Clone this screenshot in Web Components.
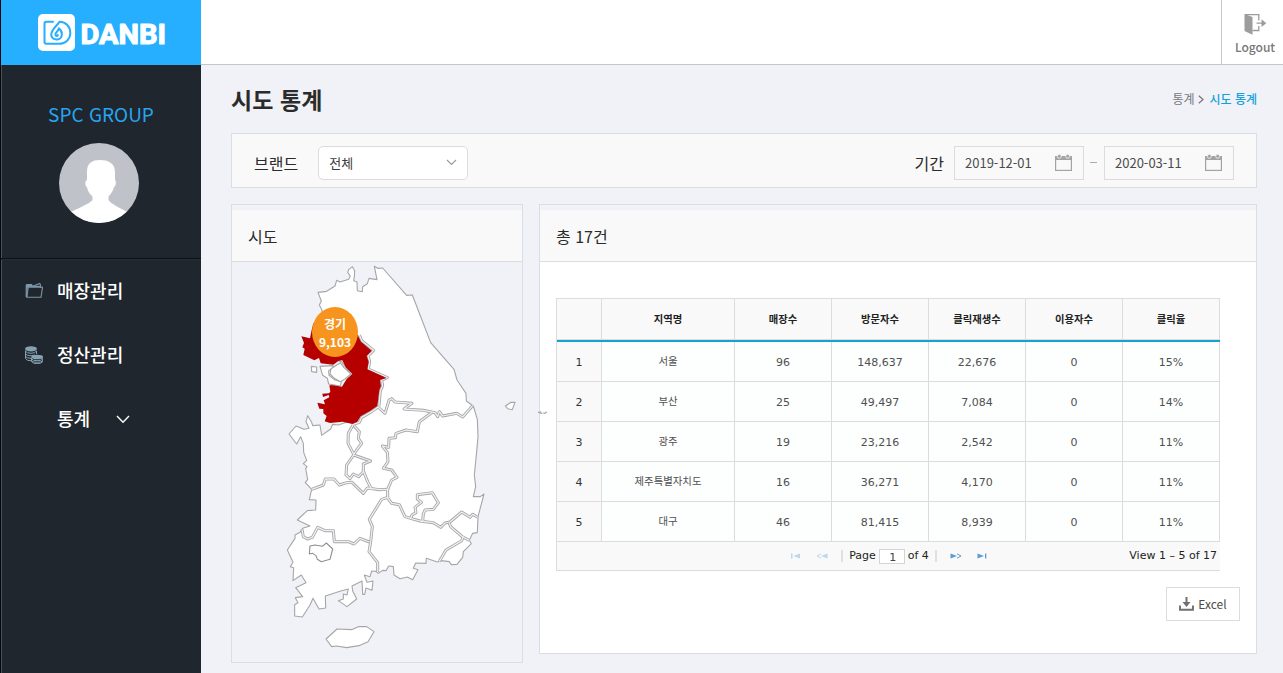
<!DOCTYPE html>
<html lang="ko">
<head>
<meta charset="utf-8">
<title>DANBI</title>
<style>
html,body{margin:0;height:100%;overflow:hidden}
body{font-family:"Noto Sans CJK KR","Noto Sans",sans-serif;color:#333;background:#f1f2f7}
</style>
</head>
<body>
<danbi-app></danbi-app>
<script>
const define = (name, html, setup) => customElements.define(name, class extends HTMLElement {
  connectedCallback() {
    if (this.shadowRoot) return;
    const root = this.attachShadow({ mode: 'open' });
    root.innerHTML = typeof html === 'function' ? html(this) : html;
    if (setup) setup(root, this);
  }
});

define('danbi-logo', `
<style>
:host{display:block;height:65px;background:#26aeff;border-left:1px solid #04060a;box-sizing:border-box}
svg{display:block}
text{font:700 28.5px Roboto,sans-serif;fill:#fff;stroke:#fff;stroke-width:1.1;stroke-linejoin:round}
</style>
<svg width="200" height="65" viewBox="1 0 200 65">
  <rect x="38" y="14" width="37" height="37" rx="5" fill="#fff"/>
  <g fill="none" stroke="#26aeff" stroke-width="2" stroke-linecap="round" stroke-linejoin="round">
    <path d="M53 21.800H46.200Q44.500 21.800 44.500 23.500V42Q44.500 43.800 46.200 43.800H58.500C66.500 43.800 70.300 38.600 70.300 32.800C70.300 26.600 66 22 59.500 21.800C58 24.600 51.200 29.800 51.200 34.400C51.200 41.300 61.900 41.200 61.900 34.200C61.900 31.500 60.600 29.800 58.800 28.300C59 31 55.200 32 55.500 34.600C55.700 36.500 57.600 36.300 57.800 35"/>
  </g>
  <text x="80.500" y="43.500" textLength="85.500" lengthAdjust="spacingAndGlyphs">DANBI</text>
</svg>`);

define('user-card', `
<style>
:host{display:flex;flex-direction:column;align-items:center;border-bottom:1px solid #0d1116;padding-top:35px;box-sizing:border-box;height:194px;box-shadow:0 1px #262d36}
.name{color:#26a5f2;font-size:19px;line-height:28px;white-space:nowrap}
svg{margin-top:15px;margin-right:4px}
</style>
<div class="name"><slot></slot></div>
<svg width="80" height="80" viewBox="0 0 80 80">
  <defs><clipPath id="c"><circle cx="40" cy="40" r="40"/></clipPath></defs>
  <g clip-path="url(#c)"><rect width="80" height="80" fill="#bfc3c9"/>
  <path fill="#fff" d="M28 29C28 20 33 17 41 17S56 20 56 29V37C57.500 38 57 43 55 44C54 48 51.500 51.500 49.500 53.500V57C52 61 60 64.500 68 69V80H12V69C21 64.500 30 61 33.500 57V53.500C31 51.500 28.500 48 28 44C26 43 25.500 38 28 37Z"/></g>
</svg>`);

const menuIcons = {
  folder: `<path fill="none" stroke="#7d97a8" stroke-width="1.100" d="M1.200 15V3.500L2 2.500H6.500L7.500 4.300H15.500V6M1.200 15.300H16L17.500 5.300H3.200L2 15"/><path fill="#7d97a8" d="M1 2.500H7L8 5H3L1.500 13ZM8 3.500L15 .8L16.500 3.800L15.500 4L14.500 2.200L9 4.200Z"/>`,
  coins: `<g fill="#86a1b2"><ellipse cx="6" cy="2.800" rx="6" ry="2.600"/><ellipse cx="12.200" cy="11" rx="5.900" ry="2.300"/></g><g fill="none" stroke="#86a1b2" stroke-width="1"><path d="M.500 4.500V12.500Q1.500 14.700 6 14.800M.500 5.300Q2 7.300 6 7.300T11.500 5V8M.500 8Q2 9.800 6 9.800L10 9M.500 10.500Q2 12.300 6 12.300M6.500 11.500V15.500Q8 17.700 12.200 17.700T17.800 15.500V11.500M6.500 13Q8 14.700 12.200 14.700T17.800 13M6.500 14.800Q8 16.300 12.200 16.300T17.800 14.800"/></g>`
};
define('menu-item', el => `
<style>
:host{display:flex;align-items:center;height:64px;padding-left:24px;color:#fff;font-size:18px;font-weight:500}
.i{width:18px;height:18px;margin-right:14px}
.i svg{display:block}
.c{margin-left:26px}
span{white-space:nowrap;line-height:26px;margin-top:-2px}
</style>
<div class="i"><svg width="18" height="18" viewBox="0 0 18 18">${menuIcons[el.getAttribute('icon')] || ''}</svg></div>
<span><slot></slot></span>
${el.hasAttribute('expandable') ? '<svg class="c" width="14" height="9" viewBox="0 0 14 9"><path d="M1 1L7 7.200L13 1" fill="none" stroke="#fff" stroke-width="1.400"/></svg>' : ''}`);

define('side-bar', `
<style>
:host{display:block;width:201px;flex:none;background:#1f262d}
.body{border-left:1px solid #04060a;box-shadow:inset 1px 0 #4c5157;height:608px}
</style>
<danbi-logo></danbi-logo>
<div class="body">
<user-card>SPC GROUP</user-card>
<menu-item icon="folder">매장관리</menu-item>
<menu-item icon="coins">정산관리</menu-item>
<menu-item expandable>통계</menu-item>
</div>`);

define('top-bar', `
<style>
:host{display:flex;justify-content:flex-end;height:65px;box-sizing:border-box;background:#fff;border-bottom:1px solid #c6c6ca}
.out{width:61px;border-left:1px solid #c6c6ca;display:flex;flex-direction:column;align-items:center;padding:13px 0 0 4px;color:#777;font-size:12px;font-weight:500;line-height:18px;box-sizing:border-box;width:62px;white-space:nowrap}
svg{margin-bottom:3px;flex:none;margin-left:2px}
span{padding-left:1px}
</style>
<div class="out">
<svg width="23" height="22" viewBox="0 0 23 22"><path fill="#9c9c9c" d="M.500 1L8.500 4V21.800L.500 18Z"/><path fill="none" stroke="#9c9c9c" stroke-width="1.300" d="M1 1.600H14.800V7.500M14.800 13V17.500H8.500M12.500 10.200H19"/><path fill="#9c9c9c" d="M17.500 6.300L22.300 10.200L17.500 14Z"/></svg>
<span>Logout</span>
</div>`);

define('page-title', `
<style>
:host{display:flex;justify-content:space-between;height:68px}
h1{margin:0;padding-top:16px;font-size:23px;line-height:36px;font-weight:700;color:#2b2b2b;letter-spacing:.1px}
.crumb{padding-top:25px;font-size:12px;line-height:18px;color:#777;display:flex;align-items:center;height:18px}
svg{margin:1px 5px 0 4px}
b{font-weight:500;color:#13a2dc}
</style>
<h1>시도 통계</h1>
<div class="crumb">통계<svg width="6" height="9" viewBox="0 0 6 9"><path d="M.800 .800L5 4.500L.800 8.200" fill="none" stroke="#777" stroke-width="1.200"/></svg><b>시도 통계</b></div>`);

define('date-field', `
<style>
:host{display:flex;align-items:center;justify-content:space-between;width:130px;height:34px;border:1px solid #dcdcdc;box-sizing:border-box;padding:0 11px 0 10px;font-size:13px;color:#4c4c4c;white-space:nowrap}
</style>
<span><slot></slot></span>
<svg width="17" height="17" viewBox="0 0 17 17"><rect x=".600" y="2.600" width="15.800" height="13.800" fill="none" stroke="#a3a3a3" stroke-width="1.200"/><path fill="#a3a3a3" d="M0 2H17V6H0Z"/><g fill="#a3a3a3" stroke="#f9f9f9" stroke-width=".800"><circle cx="4.300" cy="2.300" r="2"/><circle cx="12.700" cy="2.300" r="2"/></g></svg>`);

define('filter-bar', `
<style>
:host{display:flex;align-items:center;height:55px;box-sizing:border-box;border:1px solid #dcdde0;background:#f9f9f9;padding:4px 22px 0;font-size:16px;line-height:24px;color:#2b2b2b}
.sel{display:flex;align-items:center;justify-content:space-between;margin-left:20px;width:150px;height:34px;box-sizing:border-box;border:1px solid #dcdcdc;border-radius:5px;background:#fff;padding:0 10px;font-size:13px;color:#3c3c3c}
.r{display:flex;align-items:center;margin-left:auto}
date-field{margin-left:10px}
i{width:7px;height:1px;background:#aaa;margin-left:6px}
i + date-field{margin-left:7px}
</style>
<span>브랜드</span>
<div class="sel"><span>전체</span><svg width="11" height="7" viewBox="0 0 11 7"><path d="M1 1L5.500 5.500L10 1" fill="none" stroke="#999" stroke-width="1.100"/></svg></div>
<div class="r"><span>기간</span><date-field>2019-12-01</date-field><i></i><date-field>2020-03-11</date-field></div>`);

define('info-panel', `
<style>
:host{display:block;box-sizing:border-box;border:1px solid #dcdde0}
.h{height:51px;margin-top:5px;background:#f9f9f9;border-bottom:1px solid #dcdde0;padding-left:16px;font-size:16px;line-height:53px;color:#2b2b2b;white-space:nowrap}
.b{background:var(--body-bg,transparent);height:calc(100% - 57px)}
</style>
<div class="h"><slot name="title"></slot></div>
<div class="b"><slot></slot></div>`);

/* Map geometry: 3 units per pixel, origin at the map's top left corner */
const borders = [
 '238,225 246,243 281,271 264,288 269,305 265,327 322,353 305,360 308,378 301,392 297,438',
 '217,494 238,487 245,472 275,455 294,441 315,460 327,421 335,416 345,426 396,430 372,447 430,451 465,458 473,470 478,455 488,468 530,460 548,471 578,437',
 '455,458 418,485 412,515 378,510 348,520 346,533 327,535 326,562 307,558 322,577 324,605 310,625 335,630 351,652 335,660 323,688',
 '95,688 130,675 136,657 162,657 178,675 200,668 216,667 250,700 262,684 298,689 323,688 323,714 335,730 358,734 375,770 392,775 420,783 460,788 482,802 495,789 510,786 545,756 570,772 578,763 592,771',
 '323,712 305,718 268,778 277,800 272,845 267,875 293,908 293,936',
 '66,808 70,830 82,837 97,832 113,802 135,812 160,812 163,845 205,845 222,852 240,835 268,846',
 '219,495 205,520 204,550 221,583 230,570 245,550 235,535 238,515 222,497',
 '221,585 272,603 250,612 250,635 236,650 220,642 210,656 198,645 200,615 221,585',
 '250,633 263,665 275,688',
 '392,775 396,765 408,758 405,742 424,727 412,717 412,704 457,698 475,728 460,748 435,750 430,762 428,783',
 '508,790 512,800 548,831 568,841','550,829 545,842 498,870 478,904'
];
define('region-map', `
<style>
:host{display:block;position:relative;height:100%;z-index:1}
svg{display:block;overflow:visible}
.land{fill:#fff;stroke:#a6a6a6;stroke-width:3.300;stroke-linejoin:round}
.o{fill:none;stroke:#a6a6a6;stroke-width:9;stroke-linejoin:round}
.n{fill:none;stroke:#eff0f5;stroke-width:3.800;stroke-linejoin:round}
.pin{position:absolute;left:80px;top:45px;width:46px;height:50px;border-radius:50%;background:#f7941e;color:#fff;font-weight:700;font-size:12px;line-height:18px;text-align:center;box-sizing:border-box;padding-top:8px}
</style>
<svg width="291" height="400" viewBox="-144 6 873 1200">
<polygon class="land" points="114,97 140,94 165,78 170,61 180,66 206,58 211,48 203,37 206,29 217,20 224,32 223,50 221,62 231,66 232,92 247,95 248,80 262,71 267,55 291,59 283,19 293,25 308,24 380,106 397,105 452,248 522,328 531,360 558,400 559,423 580,438 592,478 594,530 590,575 583,645 587,680 580,710 601,710 612,702 594,770 592,818 578,820 568,841 574,851 550,875 548,892 531,913 514,914 508,905 484,902 472,906 439,895 438,910 407,909 400,925 414,929 398,959 382,951 360,956 342,945 340,920 326,918 318,932 308,931 295,940 288,934 275,933 270,950 253,945 261,967 279,963 276,991 258,984 254,1003 248,1003 246,963 216,978 218,992 230,1017 201,1040 175,1022 190,1017 190,1002 201,1005 205,987 180,994 136,1008 137,1044 117,1047 99,1015 90,1035 67,1071 44,1068 44,1034 54,1028 46,1013 68,1010 47,983 78,968 64,945 39,962 41,923 31,920 39,907 22,870 45,835 45,825 60,817 68,805 90,798 52,780 82,752 107,750 108,720 88,719 95,688 76,668 83,658 77,626 81,620 70,611 80,601 71,577 70,550 62,530 50,552 27,522 48,498 72,508 87,505 78,485 83,467 95,487 98,497 120,495 125,526 152,507 158,493 175,495 200,487 160,470 160,400 185,385 215,345 185,305 130,290 126,150 118,135 124,123"/>
<g id="b"></g>
<polygon fill="#b60000" points="100,190 95,210 90,235 64,229 72,249 67,262 74,266 70,285 103,301 117,294 122,310 160,314 175,303 187,301 197,322 217,342 200,357 186,380 165,375 148,376 151,395 147,400 127,401 129,411 146,405 148,412 131,421 135,433 112,428 118,446 130,447 130,460 140,468 134,484 150,489 188,485 217,492 232,485 242,469 270,453 292,438 298,390 303,378 300,360 320,354 262,328 266,305 260,288 275,272 243,245 233,225 200,190"/>
<g class="land">
<polygon points="120,319 158,317 162,322 146,332 147,346 165,360 184,365 181,378 146,372 142,355 128,346"/>
<polygon points="153,326 181,308 192,323 213,342 195,357 181,365 163,355 150,342"/>
<polygon points="94,319 110,321 110,337 95,335"/>
<polygon points="90,858 105,855 127,859 139,849 158,867 150,898 124,905 112,898 108,887 98,880 88,882" stroke="#8e8e8e"/>
<polygon points="171,1107 215,1109 235,1100 260,1100 282,1115 264,1145 237,1157 200,1163 170,1158 155,1160 138,1137"/>
<polygon points="676,438 693,427 705,427 697,449 683,446"/>
<path d="M774 457L783 456L779 459L787 460M789 459L794 460L801 456M794 460H797"/>
</g>
</svg>
<div class="pin">경기<br>9,103</div>`, root => {
  const seg = c => borders.map(p => `<polyline class="${c}" points="${p}"/>`).join('');
  root.getElementById('b').innerHTML = seg('o') + seg('n');
});

const rows = [['서울','96','148,637','22,676','0','15%'],['부산','25','49,497','7,084','0','14%'],['광주','19','23,216','2,542','0','11%'],['제주특별자치도','16','36,271','4,170','0','11%'],['대구','46','81,415','8,939','0','11%']];
define('data-grid', `
<style>
:host{display:block;width:664px;box-sizing:border-box;font:11px "DejaVu Sans","Noto Sans CJK KR",sans-serif;color:#505050;letter-spacing:0}
.t{border-left:1px solid #dcdcdc;border-top:1px solid #dcdcdc}
.row{display:grid;grid-template-columns:45px 133px repeat(5,97px)}
.row>div{height:40px;line-height:42px;box-sizing:border-box;border-right:1px solid #dcdcdc;border-bottom:1px solid #dcdcdc;text-align:center;background:#fdfefe;white-space:nowrap}
.row>.k{background:#f9f9f9;color:#333}
.row>.n{font:10.400px/37px "Noto Sans CJK KR",sans-serif}
.head{border-bottom:2px solid #12a4cf}
.row.head>div{font:700 10.300px/40px "Noto Sans CJK KR",sans-serif;height:41px;background:#f9f9f9;color:#222}
.p{display:grid;grid-template-columns:1fr auto 1fr;height:29px;box-sizing:border-box;border-left:1px solid #dcdcdc;border-bottom:1px solid #dcdcdc;background:#f9f9f9;color:#222;align-items:center;padding-right:3px}
.c{grid-column:2;display:flex;align-items:center;height:28px;padding-left:4px}
.c span{line-height:27px;height:28px}
.v{text-align:right;line-height:28px;white-space:nowrap}
.in{width:26px;height:15px;box-sizing:border-box;border:1px solid #d5d5d5;background:#fff;text-align:center;line-height:15px;margin:1px 3px 0;padding-left:2px;color:#444}
u{width:2px;height:12px;background:#e0e0e0;text-decoration:none}
svg{display:block}
.g1{margin-right:15px}.g2{margin-right:13px}.g3{margin:0 15px 0 13px}
</style>
<div class="t">
<div class="row head"><div></div><div>지역명</div><div>매장수</div><div>방문자수</div><div>클릭재생수</div><div>이용자수</div><div>클릭율</div></div>
${rows.map((r,i)=>`<div class="row"><div class="k">${i+1}</div>${r.map((v,j)=>`<div${j?'':' class="n"'}>${v}</div>`).join('')}</div>`).join('')}
</div>
<div class="p"><div class="c">
<svg class="g1" width="10" height="6" viewBox="0 0 10 6"><path fill="#bcd6ea" d="M0 .500H1.500V5.500H0ZM9 .500V5.500L2.500 3Z"/></svg>
<svg class="g2" width="12" height="6" viewBox="0 0 12 6"><path fill="#bcd6ea" d="M11.500 .500V5.500L5 3Z"/><path fill="none" stroke="#bcd6ea" d="M5 .800L1 3L5 5.200"/></svg>
<u></u><span style="margin-left:6px">Page</span><div class="in">1</div><span>of 4</span><u style="margin-left:6px"></u>
<svg class="g3" width="12" height="6" viewBox="0 0 12 6"><path fill="#5b9dd3" d="M.500 .500V5.500L7 3Z"/><path fill="none" stroke="#5b9dd3" d="M7 .800L11 3L7 5.200"/></svg>
<svg width="10" height="6" viewBox="0 0 10 6"><path fill="#5b9dd3" d="M.500 .500V5.500L7 3ZM8 .500H9.300V5.500H8Z"/></svg>
</div><div class="v">View 1 – 5 of 17</div></div>`);

define('excel-button', `
<style>
:host{display:flex;align-items:center;justify-content:center;width:74px;height:34px;box-sizing:border-box;border:1px solid #dcdcdc;background:#fff;font-size:12px;color:#4c4c4c}
svg{margin-right:4px}
span{margin-top:-2px}
</style>
<svg width="15" height="14" viewBox="0 0 15 14"><path fill="none" stroke="#707070" stroke-width="1.900" d="M1 8.500V12.700H14V8.500"/><path fill="#707070" d="M6.500 0H8.500V5H11.500L7.500 10L3.500 5H6.500Z"/></svg><span><slot></slot></span>`);

define('danbi-app', `
<style>
:host{display:flex;height:673px;width:1283px;overflow:hidden}
main{flex:1;min-width:0}
.content{padding:0 26px 0 30px}
.cols{display:flex;gap:16px;margin-top:16px;align-items:flex-start}
.map{width:292px;height:459px;position:relative;z-index:1}
.list{flex:1;height:450px;--body-bg:#fff}
.in{padding:36px 16px 0 16px}
.f{display:flex;justify-content:flex-end;margin-top:16px}
</style>
<side-bar></side-bar>
<main>
<top-bar></top-bar>
<div class="content">
<page-title></page-title>
<filter-bar></filter-bar>
<div class="cols">
<info-panel class="map"><span slot="title">시도</span><region-map></region-map></info-panel>
<info-panel class="list"><span slot="title">총 17건</span><div class="in"><data-grid></data-grid><div class="f"><excel-button>Excel</excel-button></div></div></info-panel>
</div>
</div>
</main>`);
</script>
</body>
</html>
